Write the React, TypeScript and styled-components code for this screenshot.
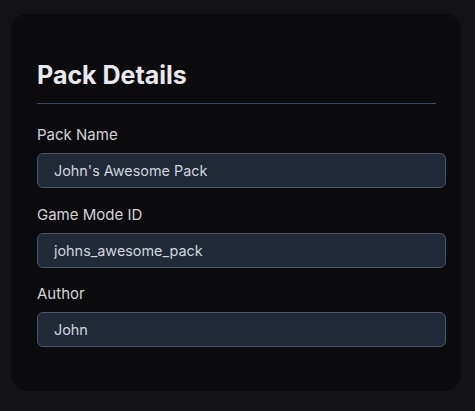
import styled, { createGlobalStyle } from "styled-components";

const GlobalStyle = createGlobalStyle`
  html, body {
    margin: 0;
    padding: 0;
    background: #131215;
  }
  body {
    font-family: Inter, "Noto Sans", "Liberation Sans", sans-serif;
    -webkit-font-smoothing: antialiased;
  }
  * {
    box-sizing: border-box;
  }
`;

const Page = styled.div`
  min-height: 411px;
  padding: 14px 14px 21px 11px;
`;

const Card = styled.section`
  width: 450px;
  background: #0b0a0d;
  border-radius: 16px;
  padding: 45px 25px 44px 26px;
`;

const Title = styled.h2`
  margin: 0 0 21px;
  padding-bottom: 12px;
  border-bottom: 1px solid #3f4a5c;
  font-size: 25px;
  line-height: 32px;
  font-weight: 700;
  color: #e9e9ed;
`;

const Form = styled.div`
  display: flex;
  flex-direction: column;
  gap: 16.5px;
`;

const Field = styled.label`
  display: flex;
  flex-direction: column;
  gap: 8px;
`;

const Label = styled.span`
  font-size: 15px;
  line-height: 20px;
  color: #d4d4d8;
`;

const Input = styled.input`
  width: calc(100% + 10px);
  height: 35px;
  padding: 0 16px;
  border: 1px solid #4a5568;
  border-radius: 6px;
  background: #1f2937;
  color: #d1d5db;
  font-family: inherit;
  font-size: 14.4px;
  outline: none;
`;

const fields = [
  { label: "Pack Name", value: "John's Awesome Pack" },
  { label: "Game Mode ID", value: "johns_awesome_pack" },
  { label: "Author", value: "John" },
];

export default function App() {
  return (
    <>
      <GlobalStyle />
      <Page>
        <Card>
          <Title>Pack Details</Title>
          <Form>
            {fields.map((f) => (
              <Field key={f.label}>
                <Label>{f.label}</Label>
                <Input defaultValue={f.value} />
              </Field>
            ))}
          </Form>
        </Card>
      </Page>
    </>
  );
}
